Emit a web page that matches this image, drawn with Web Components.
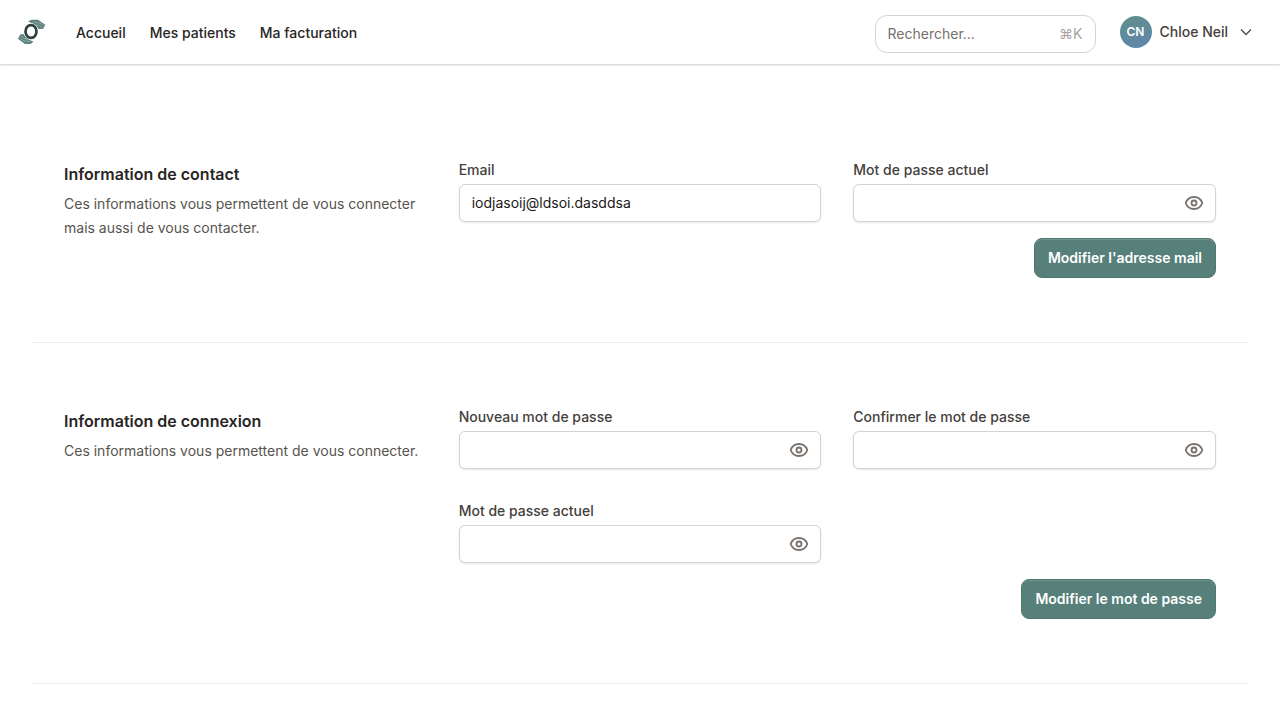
<!DOCTYPE html>
<html lang="fr">
<head>
<meta charset="utf-8">
<meta name="viewport" content="width=device-width, initial-scale=1">
<title>Mon compte</title>
<style>
	body {
		margin: 0;
		background: #fff;
		color: #292524;
		font-family: Inter, "Liberation Sans", sans-serif;
		font-size: 14px;
		line-height: 20px;
	}
</style>
</head>
<body>

<app-header>
	<nav-link href="#accueil">Accueil</nav-link>
	<nav-link href="#patients">Mes patients</nav-link>
	<nav-link href="#facturation">Ma facturation</nav-link>
	<search-box slot="tools" placeholder="Rechercher..." shortcut="⌘K"></search-box>
	<user-menu slot="tools" initials="CN">Chloe Neil</user-menu>
</app-header>

<settings-page>
	<settings-section heading="Information de contact">
		<span slot="description">Ces informations vous permettent de vous connecter mais aussi de vous contacter.</span>
		<text-field label="Email" type="email" value="iodjasoij@ldsoi.dasddsa"></text-field>
		<text-field label="Mot de passe actuel" type="password"></text-field>
		<primary-button slot="action">Modifier l'adresse mail</primary-button>
	</settings-section>
	<settings-section heading="Information de connexion">
		<span slot="description">Ces informations vous permettent de vous connecter.</span>
		<text-field label="Nouveau mot de passe" type="password"></text-field>
		<text-field label="Confirmer le mot de passe" type="password"></text-field>
		<text-field label="Mot de passe actuel" type="password"></text-field>
		<primary-button slot="action">Modifier le mot de passe</primary-button>
	</settings-section>
</settings-page>

<script>
// Attach an open shadow root filled with the given markup
function render(el, html) {
	el.attachShadow({ mode: 'open' }).innerHTML = html;
}

class AppLogo extends HTMLElement {
	constructor() {
		super();
		render(this, `
		<style>
			:host { display: block; width: 32px; height: 32px; }
			svg { display: block; }
		</style>
		<svg width="32" height="32" viewBox="0 0 32 32" fill="none" aria-hidden="true">
			<path d="M12 5.500 15.500 3.700h6.500l7.300 5-2.300 4.300h-4.500l-2.400-3.500-3.300-2Z" fill="#5d827d"/>
			<path d="m17 6 7 1 3.600 2.500M20 8.600l3.800 1.200 2.500 2" stroke="#a9c3bf" stroke-width=".6"/>
			<path d="M17.500 25.500 14.500 28H9l-7-5.300 2.400-4.400h4l2.300 3.500 3.300 2.400Z" fill="#5d827d"/>
			<path d="m14 25.700-6.200-.8-3.400-2.600m6.800 1.100-3.700-1.200L5 20" stroke="#a9c3bf" stroke-width=".6"/>
			<ellipse cx="15" cy="15.500" rx="5.700" ry="6.500" stroke="#fff" stroke-width="3.600"/>
			<ellipse cx="15" cy="15.500" rx="5.500" ry="6.400" stroke="#303f41" stroke-width="2.700"/>
		</svg>
		`);
	}
}

class NavLink extends HTMLElement {
	constructor() {
		super();
		render(this, `
		<style>
			:host { display: block; }
			a { color: #292524; font-weight: 500; text-decoration: none; }
			a:hover { color: #568079; }
		</style>
		<a href="${this.getAttribute('href')}"><slot></slot></a>
		`);
	}
}

class SearchBox extends HTMLElement {
	constructor() {
		super();
		const placeholder = this.getAttribute('placeholder');
		render(this, `
		<style>
			:host { display: block; width: 221px; }
			.box {
				display: flex;
				align-items: center;
				box-sizing: border-box;
				height: 38px;
				padding: 0 12px;
				border: 1px solid #d6d3d1;
				border-radius: 12px;
				background: #fff;
			}
			.box:focus-within { border-color: #568079; }
			input {
				flex: 1;
				min-width: 0;
				padding: 0;
				border: 0;
				outline: 0;
				background: none;
				color: inherit;
				font: inherit;
			}
			input::placeholder { color: #78716c; opacity: 1; }
			kbd { color: #a8a29e; font: inherit; }
		</style>
		<div class="box">
			<input type="text" placeholder="${placeholder}" aria-label="${placeholder}">
			<kbd>${this.getAttribute('shortcut')}</kbd>
		</div>
		`);
	}
}

class UserMenu extends HTMLElement {
	constructor() {
		super();
		render(this, `
		<style>
			:host { display: block; }
			button {
				display: flex;
				align-items: center;
				gap: 8px;
				padding: 0;
				border: 0;
				background: none;
				color: #44403c;
				font: inherit;
				font-weight: 500;
				cursor: pointer;
			}
			.avatar {
				display: grid;
				place-items: center;
				width: 32px;
				height: 32px;
				border-radius: 50%;
				background: linear-gradient(160deg, #5f9088, #6184b0);
				color: #fff;
				font-size: 12px;
				font-weight: 600;
			}
			svg { display: block; }
		</style>
		<button type="button">
			<span class="avatar">${this.getAttribute('initials')}</span>
			<slot></slot>
			<svg width="20" height="20" viewBox="0 0 20 20" fill="none" stroke="#57534e" stroke-width="1.500" aria-hidden="true">
				<path d="m5 7.500 5 5 5-5"/>
			</svg>
		</button>
		`);
	}
}

class AppHeader extends HTMLElement {
	constructor() {
		super();
		render(this, `
		<style>
			:host { display: block; }
			header {
				display: flex;
				align-items: center;
				justify-content: space-between;
				height: 64px;
				padding: 0 24px 0 16px;
				background: #fff;
				box-shadow: 0 1px 2px rgba(0, 0, 0, .2);
			}
			nav, .tools { display: flex; align-items: center; gap: 24px; }
			nav { padding-top: 2px; }
			app-logo { margin: 0 4px 2px 0; }
			::slotted(search-box) { padding-top: 4px; }
		</style>
		<header>
			<nav><app-logo></app-logo><slot></slot></nav>
			<div class="tools"><slot name="tools"></slot></div>
		</header>
		`);
	}
}

class TextField extends HTMLElement {
	constructor() {
		super();
		const type = this.getAttribute('type') || 'text';
		const eye = `
			<button type="button" aria-label="Afficher le mot de passe">
				<svg width="20" height="20" viewBox="0 0 20 20" fill="none" stroke="#78716c" stroke-width="1.800" aria-hidden="true">
					<path d="M1.700 10C3 6.300 6.200 4 10 4s7 2.300 8.300 6c-1.300 3.700-4.500 6-8.300 6s-7-2.300-8.300-6Z" stroke-linejoin="round"/>
					<circle cx="10" cy="10" r="2.500"/>
				</svg>
			</button>`;
		render(this, `
		<style>
			:host { display: block; min-width: 0; }
			label { display: block; margin-bottom: 4px; color: #44403c; font-weight: 500; }
			.box {
				display: flex;
				align-items: center;
				box-sizing: border-box;
				height: 38px;
				padding: 0 11px 0 12px;
				border: 1px solid #d6d3d1;
				border-radius: 6px;
				background: #fff;
				box-shadow: 0 1px 2px rgba(0, 0, 0, .1);
			}
			.box:focus-within { border-color: #568079; }
			input {
				flex: 1;
				min-width: 0;
				padding: 0;
				border: 0;
				outline: 0;
				background: none;
				color: #1c1917;
				font: inherit;
			}
			button { padding: 0; border: 0; background: none; cursor: pointer; }
			svg { display: block; }
		</style>
		<label for="input">${this.getAttribute('label')}</label>
		<div class="box">
			<input id="input" type="${type}" value="${this.getAttribute('value') || ''}">
			${type === 'password' ? eye : ''}
		</div>
		`);

		// The eye switches between hidden and readable password
		const button = this.shadowRoot.querySelector('button');
		if (!button) return;
		const input = this.shadowRoot.querySelector('input');
		button.addEventListener('click', () => {
			input.type = input.type === 'password' ? 'text' : 'password';
		});
	}
}

class PrimaryButton extends HTMLElement {
	constructor() {
		super();
		render(this, `
		<style>
			:host { display: block; }
			button {
				display: block;
				height: 40px;
				padding: 0 13px;
				border: 1px solid #4e7770;
				border-radius: 8px;
				background: #568079;
				box-shadow: inset 0 1px 0 rgba(255, 255, 255, .15);
				color: #fff;
				font: inherit;
				font-weight: 600;
				cursor: pointer;
			}
			button:hover { background: #487069; }
		</style>
		<button type="button"><slot></slot></button>
		`);
	}
}

class SettingsSection extends HTMLElement {
	constructor() {
		super();
		render(this, `
		<style>
			:host { display: block; border-bottom: 1px solid #eeedec; }
			section {
				display: grid;
				grid-template-columns: repeat(3, minmax(0, 1fr));
				gap: 32px;
				padding: 64px 32px;
			}
			h2 { margin: 0 0 4px; color: #292524; font-size: 16px; font-weight: 600; line-height: 28px; }
			p { margin: 0; color: #57534e; line-height: 24px; }
			form { grid-column: span 2; display: grid; gap: 16px; }
			.fields { display: grid; grid-template-columns: repeat(2, minmax(0, 1fr)); gap: 32px; }
			.actions { display: flex; justify-content: flex-end; }
			@media (max-width: 800px) {
				section, .fields { grid-template-columns: minmax(0, 1fr); }
				form { grid-column: auto; }
			}
		</style>
		<section>
			<div>
				<h2>${this.getAttribute('heading')}</h2>
				<p><slot name="description"></slot></p>
			</div>
			<form>
				<div class="fields"><slot></slot></div>
				<div class="actions"><slot name="action"></slot></div>
			</form>
		</section>
		`);
	}
}

class SettingsPage extends HTMLElement {
	constructor() {
		super();
		render(this, `
		<style>
			:host { display: block; }
			main { padding: 32px 32px 0; }
		</style>
		<main><slot></slot></main>
		`);
	}
}

customElements.define('app-logo', AppLogo);
customElements.define('nav-link', NavLink);
customElements.define('search-box', SearchBox);
customElements.define('user-menu', UserMenu);
customElements.define('app-header', AppHeader);
customElements.define('text-field', TextField);
customElements.define('primary-button', PrimaryButton);
customElements.define('settings-section', SettingsSection);
customElements.define('settings-page', SettingsPage);
</script>
</body>
</html>
